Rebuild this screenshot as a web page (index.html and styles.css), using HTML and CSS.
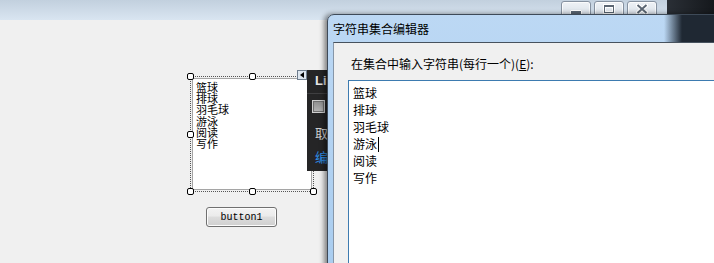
FILE: index.html
```
<!DOCTYPE html>
<html lang="zh-CN">
	<head>
		<meta charset="utf-8">
		<title>字符串集合编辑器</title>
		<link rel="stylesheet" href="styles.css">
	</head>
	<body>
		<div class="screen">
			<div class="topbar">
				<div class="caption-buttons">
					<span class="cbtn"><i class="g-min"></i></span>
					<span class="cbtn"><i class="g-max"></i></span>
					<span class="cbtn">
						<svg width="12" height="10" viewBox="0 0 12 10">
							<path d="M1.5 1 L10.5 9 M10.5 1 L1.5 9" stroke="#fff" stroke-width="4" stroke-linecap="round"/>
							<path d="M1.5 1 L10.5 9 M10.5 1 L1.5 9" stroke="#5b6673" stroke-width="2"/>
						</svg>
					</span>
				</div>
				<div class="glass-dark"></div>
			</div>

			<div class="designer">
				<div class="selection">
					<span class="handle" style="left:-4px;top:-4px"></span>
					<span class="handle" style="left:58px;top:-4px"></span>
					<span class="handle" style="left:-4px;top:54px"></span>
					<span class="handle" style="left:-4px;top:111px"></span>
					<span class="handle" style="left:58px;top:111px"></span>
					<span class="handle" style="left:119px;top:111px"></span>
					<div class="listbox">
						<div>篮球</div>
						<div>排球</div>
						<div>羽毛球</div>
						<div>游泳</div>
						<div>阅读</div>
						<div>写作</div>
					</div>
				</div>
				<span class="smart-tag"><i></i></span>
				<div class="tag-panel">
					<div class="tag-title">Li</div>
					<div class="tag-sep"></div>
					<span class="tag-check"></span>
					<div class="tag-item">取</div>
					<div class="tag-link">编</div>
				</div>
				<button type="button" class="button1">button1</button>
			</div>

			<div class="dialog">
				<div class="titlebar">字符串集合编辑器</div>
				<div class="client">
					<div class="prompt">在集合中输入字符串(每行一个)(<u>E</u>):</div>
					<div class="editbox">
						<div>篮球</div>
						<div>排球</div>
						<div>羽毛球</div>
						<div>游泳<span class="caret"></span></div>
						<div>阅读</div>
						<div>写作</div>
					</div>
				</div>
			</div>
		</div>
	</body>
</html>
```

FILE: styles.css
```
	body {
		margin: 0;
		overflow: hidden;
		font-family: "Noto Sans CJK SC", "Liberation Sans", sans-serif;
		font-size: 12px;
		color: #000;
	}

	.screen {
		position: relative;
		width: 714px;
		height: 263px;
		overflow: hidden;
		background: #f0f0f0;
	}

	.topbar {
		height: 20px;
		display: flex;
		justify-content: flex-end;
		background: linear-gradient(#c2d0de, #d9e5f1);
	}

	.caption-buttons {
		display: flex;
		gap: 3px;
		margin-right: 10px;
		padding-top: 1px;
	}

	.cbtn {
		width: 30px;
		height: 19px;
		box-sizing: border-box;
		border: 1px solid #8591a0;
		border-radius: 3px 3px 0 0;
		background: linear-gradient(#eef2f6, #d3dbe4);
		box-shadow: inset 0 0 0 1px rgba(255,255,255,.7);
		display: flex;
		justify-content: center;
		padding-top: 2px;
	}

	.g-min {
		width: 10px;
		height: 3px;
		margin-top: 6px;
		background: #5b6673;
		border: 1px solid #fff;
		border-radius: 1px;
	}

	.g-max {
		width: 8px;
		height: 5px;
		margin-top: 1px;
		border: 1px solid #5b6673;
		border-top-width: 2px;
		box-shadow: 0 0 0 1px #fff, inset 0 0 0 1px #fff;
	}

	.glass-dark {
		width: 47px;
		background: linear-gradient(90deg, #2a2f36, #15181c);
	}

	/* form designer */

	.designer {
		position: relative;
		height: 243px;
	}

	.selection {
		position: absolute;
		left: 190px;
		top: 56px;
		width: 124px;
		height: 116px;
		box-sizing: border-box;
		padding: 1px;
		border: 1px dotted #555;
	}

	.handle {
		position: absolute;
		width: 7px;
		height: 7px;
		box-sizing: border-box;
		border: 1px solid #000;
		border-radius: 2px;
		background: #fff;
		z-index: 2;
	}

	.listbox {
		width: 120px;
		height: 112px;
		box-sizing: border-box;
		border: 1px solid #a5a5a5;
		background: #fff;
		padding: 3px 3px;
		font-size: 11px;
		line-height: 11.2px;
	}

	.smart-tag {
		position: absolute;
		left: 297px;
		top: 50px;
		width: 10px;
		height: 10px;
		box-sizing: border-box;
		border: 1px solid #6f7e8e;
		background: #dde6ef;
		z-index: 3;
	}

	.smart-tag i {
		position: absolute;
		left: 2px;
		top: 1px;
		border-top: 3px solid transparent;
		border-bottom: 3px solid transparent;
		border-right: 4px solid #000;
	}

	.tag-panel {
		position: absolute;
		left: 307px;
		top: 50px;
		width: 40px;
		height: 101px;
		background: #252526;
		box-sizing: border-box;
		padding-left: 8px;
	}

	.tag-title {
		color: #e4e4e4;
		font-family: "Liberation Sans", sans-serif;
		font-weight: bold;
		font-size: 13px;
		line-height: 16px;
		margin-top: 3px;
	}

	.tag-sep {
		height: 1px;
		background: #3f3f41;
		margin: 4px 0 0 -8px;
	}

	.tag-check {
		display: block;
		width: 13px;
		height: 13px;
		box-sizing: border-box;
		margin: 6px 0 0 -3px;
		border: 1px solid #cfcfcf;
		background: linear-gradient(#8d8d8d, #b5b5b5);
		box-shadow: inset 0 0 0 1px #6f6f6f;
	}

	.tag-item {
		color: #d0d0d0;
		font-size: 13px;
		line-height: 16px;
		margin-top: 12px;
	}

	.tag-link {
		color: #2f8fe8;
		font-size: 13px;
		line-height: 16px;
		margin-top: 8px;
	}

	.button1 {
		position: absolute;
		left: 206px;
		top: 187px;
		width: 71px;
		height: 20px;
		padding: 0;
		border: 1px solid #707070;
		border-radius: 3px;
		background: linear-gradient(#f3f3f3 0%, #ebebeb 45%, #dddddd 50%, #cfcfcf 100%);
		box-shadow: inset 0 0 0 1px #fcfcfc;
		font-family: "Liberation Mono", monospace;
		font-size: 10px;
		color: #000;
	}

	/* dialog window */

	.dialog {
		position: absolute;
		left: 327px;
		top: 14px;
		width: 420px;
		height: 270px;
		box-sizing: border-box;
		border: 1px solid #3e4a58;
		border-radius: 7px 0 0 0;
		background:
			linear-gradient(90deg, rgba(31,40,51,0) 336px, #1f2833 354px),
			linear-gradient(#bcd8f4, #a8ccef);
		box-shadow: -3px 0 5px rgba(0,0,0,.45);
		display: flex;
		flex-direction: column;
		z-index: 5;
	}

	.titlebar {
		height: 27px;
		line-height: 27px;
		padding-left: 5px;
		font-size: 12px;
		color: #000;
	}

	.client {
		flex: 1;
		margin-left: 5px;
		background: #f0f0f0;
		border-top: 1px solid #47525e;
		border-left: 1px solid #8696a8;
		padding: 13px 0 0 14px;
	}

	.prompt {
		padding-left: 3px;
		line-height: 16px;
	}

	.editbox {
		margin-top: 8px;
		height: 200px;
		background: #fff;
		border-top: 1px solid #3d7bb0;
		border-left: 1px solid #3d7bb0;
		padding: 3px 0 0 4px;
		line-height: 17px;
	}

	.caret {
		display: inline-block;
		width: 1px;
		height: 15px;
		background: #000;
		vertical-align: -3px;
		margin-left: 1px;
	}
```
